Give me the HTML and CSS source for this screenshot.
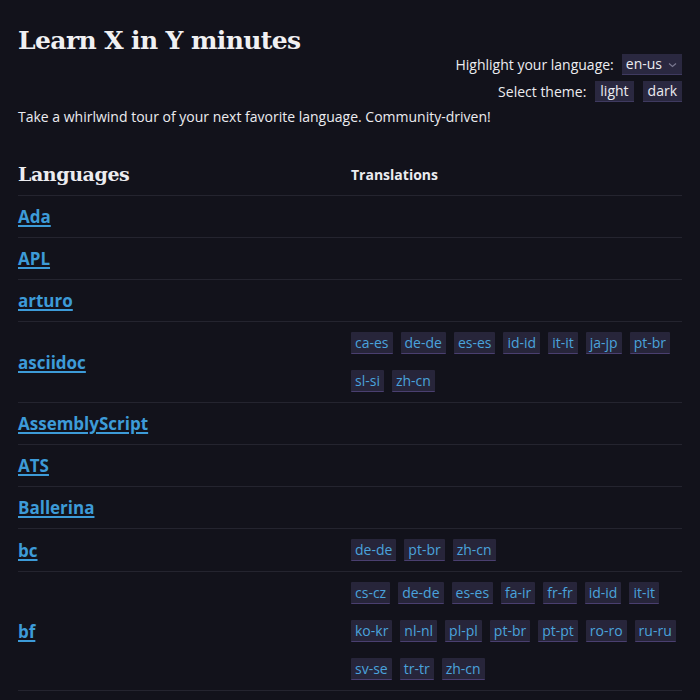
FILE: index.html
```html
<!DOCTYPE html>
<html lang="en">
<head>
<meta charset="utf-8">
<title>Learn X in Y minutes</title>
<link rel="stylesheet" href="styles.css">
</head>
<body>
<header class="top">
  <h1 class="title">Learn X in Y minutes</h1>
  <div class="controls">
    <div class="control-row">
      <span>Highlight your language:</span>
      <span class="select">en-us <svg class="chev" width="9" height="6" viewBox="0 0 9 6"><path d="M1 1.5 L4.5 4.5 L8 1.5" fill="none" stroke="#7a7890" stroke-width="1.2"/></svg></span>
    </div>
    <div class="control-row">
      <span>Select theme:</span>
      <span class="btn">light</span>
      <span class="btn">dark</span>
    </div>
  </div>
  <p class="desc">Take a whirlwind tour of your next favorite language. Community-driven!</p>
</header>

<div class="table">
  <div class="row head">
    <div class="cell lang"><h2 class="th-lang">Languages</h2></div>
    <div class="cell trans"><span class="th-trans">Translations</span></div>
  </div>
  <div class="row"><div class="cell lang"><a href="#">Ada</a></div><div class="cell trans"></div></div>
  <div class="row"><div class="cell lang"><a href="#">APL</a></div><div class="cell trans"></div></div>
  <div class="row"><div class="cell lang"><a href="#">arturo</a></div><div class="cell trans"></div></div>
  <div class="row"><div class="cell lang"><a href="#">asciidoc</a></div><div class="cell trans chips">
    <a class="chip" href="#">ca-es</a><a class="chip" href="#">de-de</a><a class="chip" href="#">es-es</a><a class="chip" href="#">id-id</a><a class="chip" href="#">it-it</a><a class="chip" href="#">ja-jp</a><a class="chip" href="#">pt-br</a><a class="chip" href="#">sl-si</a><a class="chip" href="#">zh-cn</a>
  </div></div>
  <div class="row"><div class="cell lang"><a href="#">AssemblyScript</a></div><div class="cell trans"></div></div>
  <div class="row"><div class="cell lang"><a href="#">ATS</a></div><div class="cell trans"></div></div>
  <div class="row"><div class="cell lang"><a href="#">Ballerina</a></div><div class="cell trans"></div></div>
  <div class="row"><div class="cell lang"><a href="#">bc</a></div><div class="cell trans chips">
    <a class="chip" href="#">de-de</a><a class="chip" href="#">pt-br</a><a class="chip" href="#">zh-cn</a>
  </div></div>
  <div class="row"><div class="cell lang"><a href="#">bf</a></div><div class="cell trans chips">
    <a class="chip" href="#">cs-cz</a><a class="chip" href="#">de-de</a><a class="chip" href="#">es-es</a><a class="chip" href="#">fa-ir</a><a class="chip" href="#">fr-fr</a><a class="chip" href="#">id-id</a><a class="chip" href="#">it-it</a><a class="chip" href="#">ko-kr</a><a class="chip" href="#">nl-nl</a><a class="chip" href="#">pl-pl</a><a class="chip" href="#">pt-br</a><a class="chip" href="#">pt-pt</a><a class="chip" href="#">ro-ro</a><a class="chip" href="#">ru-ru</a><a class="chip" href="#">sv-se</a><a class="chip" href="#">tr-tr</a><a class="chip" href="#">zh-cn</a>
  </div></div>
</div>
</body>
</html>
```

FILE: styles.css
```css
html { background: #12121b; }
body {
  margin: 0;
  padding: 0 18px;
  background: #12121b;
  color: #ececf0;
  font-family: "Open Sans", "Noto Sans", sans-serif;
  font-size: 14px;
}
.top {
  display: flex;
  flex-direction: column;
}
.title {
  margin: 24px 0 0;
  font-family: "DejaVu Serif", serif;
  font-weight: bold;
  font-size: 25px;
  line-height: 34px;
  letter-spacing: -0.6px;
  color: #f0f0f2;
}
.controls {
  display: flex;
  flex-direction: column;
  align-items: flex-end;
  gap: 6px;
  margin-top: -4px;
}
.control-row {
  display: flex;
  align-items: center;
  gap: 5px;
  line-height: 20px;
}
.select {
  display: inline-flex;
  align-items: center;
  gap: 6px;
  background: #2a2840;
  padding: 0 5px 0 4px;
  height: 20px;
  border-bottom: 1px solid #3f3a60;
  margin-left: 3px;
}
.chev { margin-top: 1px; }
.btn {
  background: #2a2840;
  padding: 0 5px;
  height: 20px;
  border-bottom: 1px solid #3f3a60;
  margin-left: 4px;
}
.desc {
  margin: 5px 0 0;
  line-height: 20px;
}
.table {
  margin-top: 27px;
  display: flex;
  flex-direction: column;
}
.row {
  display: grid;
  grid-template-columns: 1fr 1fr;
  border-bottom: 1px solid #24242f;
}
.row.head { align-items: center; }
.cell {
  padding: 8px 0;
  display: flex;
  align-items: center;
}
.th-lang {
  margin: 0;
  font-family: "DejaVu Serif", serif;
  font-weight: bold;
  font-size: 19px;
  line-height: 25px;
  letter-spacing: -0.4px;
}
.th-trans {
  font-weight: bold;
  font-size: 14px;
  padding-left: 1px;
}
.lang a {
  color: #3d9bd8;
  font-weight: bold;
  font-size: 17px;
  line-height: 25px;
  text-decoration: underline;
  text-decoration-thickness: 2px;
  text-underline-offset: 2px;
}
.chips {
  padding: 2px 0 2px 1px;
  flex-wrap: wrap;
  column-gap: 8px;
}
.chip {
  display: inline-block;
  margin: 8px 0;
  padding: 0 4px;
  height: 21px;
  line-height: 21px;
  font-size: 14px;
  color: #4aa3dc;
  text-decoration: none;
  background: #27253a;
  border-bottom: 1px solid #4a3f70;
  border-radius: 1px;
}
```
